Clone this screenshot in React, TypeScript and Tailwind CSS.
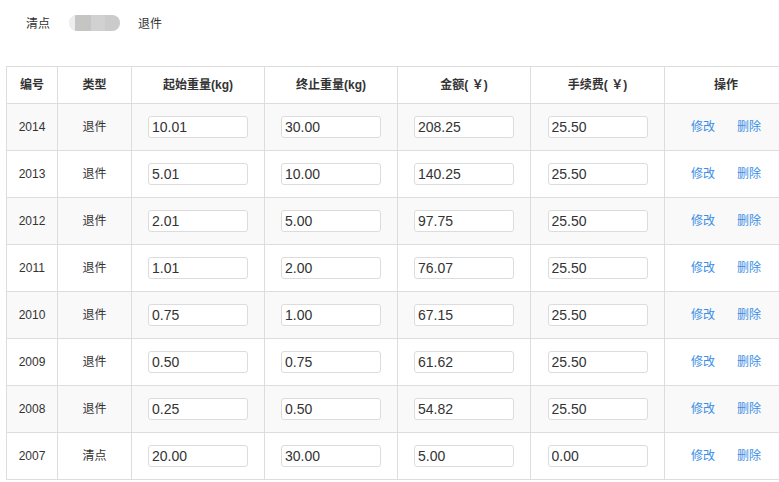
import React from "react";

const rows = [
  { id: "2014", type: "退件", a: "10.01", b: "30.00", c: "208.25", d: "25.50" },
  { id: "2013", type: "退件", a: "5.01", b: "10.00", c: "140.25", d: "25.50" },
  { id: "2012", type: "退件", a: "2.01", b: "5.00", c: "97.75", d: "25.50" },
  { id: "2011", type: "退件", a: "1.01", b: "2.00", c: "76.07", d: "25.50" },
  { id: "2010", type: "退件", a: "0.75", b: "1.00", c: "67.15", d: "25.50" },
  { id: "2009", type: "退件", a: "0.50", b: "0.75", c: "61.62", d: "25.50" },
  { id: "2008", type: "退件", a: "0.25", b: "0.50", c: "54.82", d: "25.50" },
  { id: "2007", type: "清点", a: "20.00", b: "30.00", c: "5.00", d: "0.00" },
];

const font = { fontFamily: '"Liberation Sans", Arial, "Noto Sans CJK SC", sans-serif' };

function Inp({ v }: { v: string }) {
  return (
    <input
      readOnly
      value={v}
      className="w-[100px] h-[22px] border border-[#dcdcdc] rounded-[3px] bg-white px-[3px] text-[14px] text-[#333] outline-none align-middle"
      style={font}
    />
  );
}

export default function App() {
  return (
    <div className="w-[779px] h-[482px] overflow-hidden bg-white text-[#333] text-[12px]" style={font}>
      <div className="flex items-center h-[16px] mt-[15px] pl-[26px]">
        <span className="relative top-[1px]">清点</span>
        <div className="ml-[19px] w-[51px] h-[16px] rounded-full overflow-hidden flex bg-[#ececec]">
          <div className="w-[6px] bg-[#eeeeee]" />
          <div className="w-[16px] bg-[#c5c5c4]" />
          <div className="w-[14px] bg-[#d1d1d1]" />
          <div className="flex-1 bg-[#cbcbcc]" />
        </div>
        <span className="ml-[18px] relative top-[1px]">退件</span>
      </div>
      <table className="ml-[6px] mt-[35px] border-collapse table-fixed w-[781px]">
        <colgroup>
          <col className="w-[51px]" />
          <col className="w-[74px]" />
          <col className="w-[133px]" />
          <col className="w-[133px]" />
          <col className="w-[133px]" />
          <col className="w-[134px]" />
          <col className="w-[123px]" />
        </colgroup>
        <thead>
          <tr className="h-[37px]">
            {["编号", "类型", "起始重量(kg)", "终止重量(kg)", "金额( ￥)", "手续费( ￥)", "操作"].map((h) => (
              <th key={h} className="border border-[#dddddd] font-bold text-center text-[#333] p-0">
                {h}
              </th>
            ))}
          </tr>
        </thead>
        <tbody>
          {rows.map((r, i) => (
            <tr key={r.id} className={`h-[47px] ${i % 2 === 0 ? "bg-[#f9f9f9]" : "bg-white"}`}>
              <td className="border border-[#dddddd] text-center p-0">{r.id}</td>
              <td className="border border-[#dddddd] text-center p-0">{r.type}</td>
              <td className="border border-[#dddddd] text-center p-0"><Inp v={r.a} /></td>
              <td className="border border-[#dddddd] text-center p-0"><Inp v={r.b} /></td>
              <td className="border border-[#dddddd] text-center p-0"><Inp v={r.c} /></td>
              <td className="border border-[#dddddd] text-center p-0"><Inp v={r.d} /></td>
              <td className="border border-[#dddddd] text-center p-0">
                <span className="text-[#3a8ee6]">修改</span>
                <span className="text-[#3a8ee6] ml-[22px]">删除</span>
              </td>
            </tr>
          ))}
        </tbody>
      </table>
    </div>
  );
}
